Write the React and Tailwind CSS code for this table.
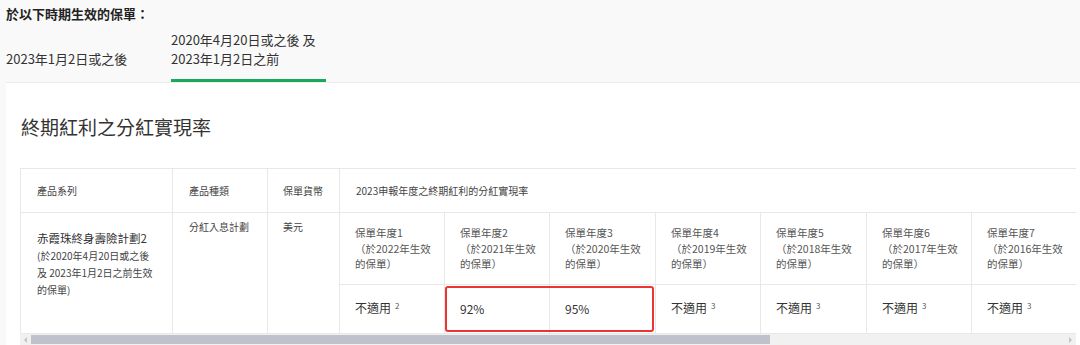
import React from "react";

const font = { fontFamily: '"Noto Sans CJK TC", "Noto Sans", sans-serif' };

const years = [
  ["1", "2022"],
  ["2", "2021"],
  ["3", "2020"],
  ["4", "2019"],
  ["5", "2018"],
  ["6", "2017"],
  ["7", "2016"],
];

const values = [
  { t: "不適用", s: "2" },
  { t: "92%" },
  { t: "95%" },
  { t: "不適用", s: "3" },
  { t: "不適用", s: "3" },
  { t: "不適用", s: "3" },
  { t: "不適用", s: "3" },
];

const widths = [152, 95, 72, 105, 105, 106, 105, 106, 105, 105, 105];

const App = () => {
  return (
    <div className="w-[1080px] h-[345px] overflow-hidden bg-[#f9f9f9] text-[#333]" style={font}>
      <div className="h-[30px] pt-[4px] pl-[6px] text-[13px] leading-[20px] font-bold text-[#222]">
        於以下時期生效的保單：
      </div>

      <div className="flex items-end pl-[6px] gap-[10px] text-[13px] leading-[19px] text-[#333]">
        <div className="w-[155px] pb-[11px] border-b-[3px] border-transparent">
          2023年1月2日或之後
        </div>
        <div className="w-[155px] pb-[11px] border-b-[3px] border-[#1aa85a]">
          2020年4月20日或之後 及
          <br />
          2023年1月2日之前
        </div>
      </div>

      <div className="ml-[6px] bg-white border-t border-[#ededed] h-[263px] pt-[30px] pl-[14px]">
        <h2 className="pl-[1px] text-[19px] leading-[28px] font-normal text-[#333]">
          終期紅利之分紅實現率
        </h2>

        <div className="relative mt-[27px] w-[1056px]">
          <div className="w-[1056px] overflow-hidden">
            <table className="table-fixed border-collapse w-[1161px] text-[10px] text-[#444]">
              <colgroup>
                {widths.map((w, i) => (
                  <col key={i} style={{ width: w }} />
                ))}
              </colgroup>
              <tbody>
                <tr className="h-[44px]">
                  <td className="border border-[#e8e8e8] pl-[16px] align-middle">產品系列</td>
                  <td className="border border-[#e8e8e8] pl-[16px] align-middle">產品種類</td>
                  <td className="border border-[#e8e8e8] pl-[15px] align-middle">保單貨幣</td>
                  <td colSpan={8} className="border border-[#e8e8e8] pl-[16px] align-middle">
                    2023申報年度之終期紅利的分紅實現率
                  </td>
                </tr>
                <tr className="h-[72px]">
                  <td
                    rowSpan={2}
                    className="border border-[#e8e8e8] pl-[16px] pr-[8px] pt-[16px] align-top"
                  >
                    <div className="text-[11.5px] leading-[18px] text-[#333]">赤霞珠終身壽險計劃2</div>
                    <div className="text-[10px] leading-[17px] text-[#444]">
                      (於2020年4月20日或之後
                      <br />
                      及 2023年1月2日之前生效
                      <br />
                      的保單)
                    </div>
                  </td>
                  <td rowSpan={2} className="border border-[#e8e8e8] pl-[16px] pt-[6px] align-top leading-[15px]">
                    分紅入息計劃
                  </td>
                  <td rowSpan={2} className="border border-[#e8e8e8] pl-[15px] pt-[6px] align-top leading-[15px]">
                    美元
                  </td>
                  {years.map(([n, y]) => (
                    <td
                      key={n}
                      className="border border-[#e8e8e8] pl-[15px] align-middle text-[10.5px] leading-[15.5px] text-[#555]"
                    >
                      保單年度{n}
                      <br />
                      （於{y}年生效
                      <br />
                      的保單）
                    </td>
                  ))}
                  <td className="border border-[#e8e8e8]" />
                </tr>
                <tr className="h-[49px]">
                  {values.map((v, i) => (
                    <td
                      key={i}
                      className="border border-[#e8e8e8] pl-[15px] align-middle text-[12px] leading-[18px] text-[#333]"
                    >
                      {v.t}
                      {v.s && (
                        <span className="relative -top-[4px] ml-[4px] text-[8px] text-[#555]">{v.s}</span>
                      )}
                    </td>
                  ))}
                  <td className="border border-[#e8e8e8]" />
                </tr>
              </tbody>
            </table>
          </div>

          {/* scrollbar */}
          <div className="flex items-center h-[11px] bg-[#f1f1f1]">
            <div className="w-[11px] h-[11px] flex items-center justify-center">
              <div className="w-0 h-0 border-y-[3px] border-y-transparent border-r-[3px] border-r-[#c4c4c4]" />
            </div>
            <div className="w-[739px] h-[9px] bg-[#c1c1cb]" />
            <div className="flex-1" />
            <div className="w-[11px] h-[11px] flex items-center justify-center">
              <div className="w-0 h-0 border-y-[3px] border-y-transparent border-l-[3px] border-l-[#c4c4c4]" />
            </div>
          </div>

          {/* highlight box */}
          <div className="absolute left-[425px] top-[118px] w-[209px] h-[46px] border-2 border-[#ee3333] rounded-[3px]" />
        </div>
      </div>
    </div>
  );
};

export default App;
